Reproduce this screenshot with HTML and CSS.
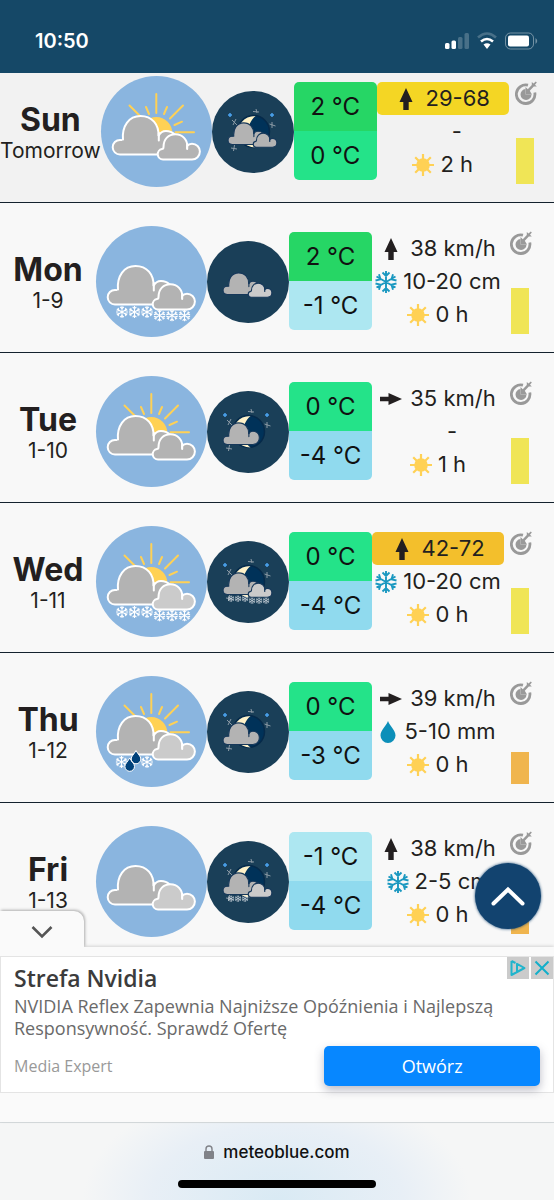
FILE: index.html
```html
<!DOCTYPE html>
<html lang="en">
<head>
    <meta charset="utf-8">
    <meta name="viewport" content="width=device-width, initial-scale=1">
    <title>Weather - meteoblue</title>
    <link rel="stylesheet" href="styles.css">
</head>
<body>
    <!-- shared icon shapes -->
    <svg class="defs" aria-hidden="true">
        <symbol id="cloud-big" viewBox="0 0 111 111">
            <path d="M19 78.500a7.300 7.300 0 0 1 0-14.600q3 0 3 .4C20.500 50 28 40 39.500 40S58 48.500 57.500 60C59 57 61.500 55 65 55c7 0 11.500 5 11.500 11.500S72 78.500 65 78.500z"/>
            <path class="notch" d="M57.800 57v7.500"/>
        </symbol>
        <symbol id="cloud-small" viewBox="0 0 111 111">
            <path d="M62 83.500a5.300 5.300 0 0 1-1-10.500q1.500 0 1.500-2C62.500 63 67.500 58.300 74.500 58.300S86.500 64 86.200 70c1-1.500 3-2.300 4.800-2.300a7.900 7.900 0 0 1 0 15.800z"/>
            <path class="notch" d="M86.200 68v5"/>
        </symbol>
        <symbol id="sunrays" viewBox="0 0 111 111">
            <circle cx="55.300" cy="57" r="16" fill="#ffd155" stroke="none"/>
            <path d="M55.300 18v19M74.500 56.300H93M28.500 29.500l12 12M82 29.500L69 42.500M45 31l3 7M66 31l-3 7M73.500 49l7.500-3.300" fill="none" stroke="#ffd155" stroke-width="2" stroke-linecap="round"/>
        </symbol>
        <symbol id="moon" viewBox="0 0 82 82">
            <circle cx="41.500" cy="40.500" r="16" fill="#003259" stroke="#062a4a" stroke-width="1.500"/>
            <path d="M43.500 25C31 25 26.500 34 26.500 41S32 56 43.500 56.500c-5-4-7.500-9-7.500-15s3-13 7.500-16.500z" fill="#fff2c8" stroke="none"/>
            <path d="M18 22v4M16 24h4M60 22v4M58 24h4" stroke="#4ba3ee" stroke-width="1.500"/>
            <path d="M20 29l5 5M24 28l-3 6M41 20.500l6 .5M44 18l1 4M57.500 33l6 2M60 31v6M19 57l6 1M22.500 54l-1 6" stroke="#8c9ba6" stroke-width="1"/>
        </symbol>
        <symbol id="flake" viewBox="0 0 22 22">
            <path d="M11 0v22M1.500 5.500l19 11M1.500 16.500l19-11M7.500 1.500L11 5l3.500-3.500M7.500 20.500L11 17l3.500 3.500M.5 9.500l5-1.200L4 3.300M21.500 9.500l-5-1.200L18 3.300M.5 12.500l5 1.200-1.500 5M21.500 12.500l-5 1.200 1.500 5" fill="none" stroke="currentColor" stroke-width="1.900"/>
        </symbol>
        <symbol id="flakes-left" viewBox="0 0 111 111">
            <use href="#flake" x="20" y="80" width="12" height="12"/>
            <use href="#flake" x="32.500" y="80" width="12" height="12"/>
            <use href="#flake" x="45" y="80" width="12" height="12"/>
        </symbol>
        <symbol id="flakes-right" viewBox="0 0 111 111">
            <use href="#flake" x="57.500" y="83.500" width="12" height="12"/>
            <use href="#flake" x="70" y="83.500" width="12" height="12"/>
            <use href="#flake" x="82.500" y="83.500" width="12" height="12"/>
        </symbol>
        <symbol id="sleet" viewBox="0 0 111 111">
            <use href="#flake" x="19.500" y="80" width="12" height="12"/>
            <use href="#flake" x="45" y="80" width="12" height="12"/>
            <path d="M40 74.500c2 4 4.800 5.500 4.800 8.500a4.800 4.800 0 0 1-9.600 0c0-3 2.800-4.500 4.800-8.500zM33.700 82c2 4 4.800 5.500 4.800 8.500a4.800 4.800 0 0 1-9.600 0c0-3 2.800-4.500 4.800-8.500z" fill="#00417a" stroke="#fff" stroke-width="1"/>
        </symbol>
        <symbol id="arrow" viewBox="0 0 22 22">
            <path d="M11 0l6.500 14H13.700v8h-5.400v-8H4.500z" fill="#231f20"/>
        </symbol>
        <symbol id="arrow-right" viewBox="0 0 22 22">
            <path d="M22 11L8.500 17V13.300H0V8.700h8.500V5z" fill="#231f20"/>
        </symbol>
        <symbol id="sun" viewBox="0 0 22 22">
            <circle cx="11" cy="11" r="6.800" fill="#ffd155"/>
            <path d="M11 0v22M0 11h22M3.200 3.200l15.600 15.600M18.800 3.200L3.200 18.800" stroke="#ffd155" stroke-width="2.200"/>
        </symbol>
        <symbol id="drop" viewBox="0 0 16 22">
            <path d="M8 0c2 5.500 7.500 9 7.500 14.500a7.500 7.500 0 0 1-15 0C.5 9 6 5.500 8 0z" fill="#0c8fb9"/>
        </symbol>
        <symbol id="target" viewBox="0 0 22 24">
            <path d="M13 4.200A9.300 9.300 0 1 0 19.800 11.500" fill="none" stroke="#999" stroke-width="2.800"/>
            <path d="M10.500 8a5.500 5.500 0 1 0 6 5.500h-6z" fill="#999"/>
            <path d="M10.500 13.500V6l2.300 2.200 4-4.200V1l1.700 1.500L20.800.5l1 1-1.800 2.300L21.800 5.500h-3l-4 4.200 2.200 3.800z" fill="#999"/>
        </symbol>
    </svg>

    <header class="status-bar">
        <span class="time">10:50</span>
        <svg class="status-icons" width="94" height="20" viewBox="0 0 94 20" aria-hidden="true">
            <g fill="#fff">
                <rect x="1" y="12" width="4.500" height="6" rx="1.500"/>
                <rect x="7.500" y="9.500" width="4.500" height="8.500" rx="1.500"/>
                <rect x="14" y="6" width="4.500" height="12" rx="1.500" opacity=".22"/>
                <rect x="20.500" y="2" width="4.500" height="16" rx="1.500" opacity=".22"/>
                <path d="M39.500 13.500q3.500-2.500 7 0L43 18z"/>
                <rect x="64" y="4.500" width="21" height="11" rx="2"/>
                <path d="M91.500 7q3.500 3 0 6z" opacity=".4"/>
            </g>
            <path d="M37 10.500q6-5 12 0" fill="none" stroke="#fff" stroke-width="2.600"/>
            <path d="M34 6.500q9-8 18 0" fill="none" stroke="#fff" stroke-width="2.600" opacity=".22"/>
            <rect x="61.500" y="2" width="28" height="16" rx="5" fill="none" stroke="#fff" opacity=".4"/>
        </svg>
    </header>

    <main class="forecast">
        <section class="day today">
            <div class="date"><h2>Sun</h2><p>Tomorrow</p></div>
            <svg class="pic-day" viewBox="0 0 111 111" role="img" aria-label="Partly cloudy">
                <use href="#sunrays"/>
                <use href="#cloud-big"/>
                <use href="#cloud-small"/>
            </svg>
            <svg class="pic-night" viewBox="0 0 82 82" role="img" aria-label="Partly cloudy night">
                <use href="#moon"/>
                <g transform="translate(9.500 9.500) scale(.56)">
                    <use href="#cloud-big" width="111" height="111"/>
                    <use href="#cloud-small" width="111" height="111"/>
                </g>
            </svg>
            <div class="temps"><span class="t-green">2 °C</span><span class="t-mint">0 °C</span></div>
            <div class="data">
                <p class="gust yellow"><svg class="icon"><use href="#arrow"/></svg>29-68</p>
                <p><span class="icon"></span>-</p>
                <p><svg class="icon"><use href="#sun"/></svg>2 h</p>
            </div>
            <div class="rating">
                <svg class="target"><use href="#target"/></svg>
                <span class="bar high"></span>
            </div>
        </section>

        <section class="day">
            <div class="date"><h2>Mon</h2><p>1-9</p></div>
            <svg class="pic-day" viewBox="0 0 111 111" role="img" aria-label="Snow">
                <use href="#cloud-big"/>
                <use href="#cloud-small"/>
                <use href="#flakes-left"/>
                <use href="#flakes-right"/>
            </svg>
            <svg class="pic-night" viewBox="0 0 82 82" role="img" aria-label="Overcast night">
                <g transform="translate(9.500 9.500) scale(.56)">
                    <use href="#cloud-big" width="111" height="111"/>
                    <use class="light" href="#cloud-small" width="111" height="111"/>
                </g>
            </svg>
            <div class="temps"><span class="t-green">2 °C</span><span class="t-ice">-1 °C</span></div>
            <div class="data">
                <p class="wind"><svg class="icon"><use href="#arrow"/></svg>38 km/h</p>
                <p><svg class="icon snow"><use href="#flake"/></svg>10-20 cm</p>
                <p><svg class="icon"><use href="#sun"/></svg>0 h</p>
            </div>
            <div class="rating">
                <svg class="target"><use href="#target"/></svg>
                <span class="bar high"></span>
            </div>
        </section>

        <section class="day">
            <div class="date"><h2>Tue</h2><p>1-10</p></div>
            <svg class="pic-day" viewBox="0 0 111 111" role="img" aria-label="Partly cloudy">
                <use href="#sunrays"/>
                <use href="#cloud-big"/>
                <use href="#cloud-small"/>
            </svg>
            <svg class="pic-night" viewBox="0 0 82 82" role="img" aria-label="Partly cloudy night">
                <use href="#moon"/>
                <g transform="translate(9.500 9.500) scale(.56)">
                    <use href="#cloud-big" width="111" height="111"/>
                </g>
            </svg>
            <div class="temps"><span class="t-mint">0 °C</span><span class="t-sky">-4 °C</span></div>
            <div class="data">
                <p class="wind"><svg class="icon"><use href="#arrow-right"/></svg>35 km/h</p>
                <p><span class="icon"></span>-</p>
                <p><svg class="icon"><use href="#sun"/></svg>1 h</p>
            </div>
            <div class="rating">
                <svg class="target"><use href="#target"/></svg>
                <span class="bar high"></span>
            </div>
        </section>

        <section class="day">
            <div class="date"><h2>Wed</h2><p>1-11</p></div>
            <svg class="pic-day" viewBox="0 0 111 111" role="img" aria-label="Sun and snow">
                <use href="#sunrays"/>
                <use href="#cloud-big"/>
                <use class="light" href="#cloud-small"/>
                <use href="#flakes-left"/>
                <use href="#flakes-right"/>
            </svg>
            <svg class="pic-night" viewBox="0 0 82 82" role="img" aria-label="Snow at night">
                <use href="#moon"/>
                <g transform="translate(9.500 9.500) scale(.56)">
                    <use href="#cloud-big" width="111" height="111"/>
                    <use class="light" href="#cloud-small" width="111" height="111"/>
                    <use href="#flakes-left" width="111" height="111"/>
                    <use href="#flakes-right" width="111" height="111"/>
                </g>
            </svg>
            <div class="temps"><span class="t-mint">0 °C</span><span class="t-sky">-4 °C</span></div>
            <div class="data">
                <p class="gust orange"><svg class="icon"><use href="#arrow"/></svg>42-72</p>
                <p><svg class="icon snow"><use href="#flake"/></svg>10-20 cm</p>
                <p><svg class="icon"><use href="#sun"/></svg>0 h</p>
            </div>
            <div class="rating">
                <svg class="target"><use href="#target"/></svg>
                <span class="bar high"></span>
            </div>
        </section>

        <section class="day">
            <div class="date"><h2>Thu</h2><p>1-12</p></div>
            <svg class="pic-day" viewBox="0 0 111 111" role="img" aria-label="Sleet">
                <use href="#sunrays"/>
                <use href="#cloud-big"/>
                <use class="light" href="#cloud-small"/>
                <use href="#sleet"/>
            </svg>
            <svg class="pic-night" viewBox="0 0 82 82" role="img" aria-label="Partly cloudy night">
                <use href="#moon"/>
                <g transform="translate(9.500 9.500) scale(.56)">
                    <use href="#cloud-big" width="111" height="111"/>
                </g>
            </svg>
            <div class="temps"><span class="t-mint">0 °C</span><span class="t-sky">-3 °C</span></div>
            <div class="data">
                <p class="wind"><svg class="icon"><use href="#arrow-right"/></svg>39 km/h</p>
                <p class="rain"><svg class="icon drop"><use href="#drop"/></svg>5-10 mm</p>
                <p><svg class="icon"><use href="#sun"/></svg>0 h</p>
            </div>
            <div class="rating">
                <svg class="target"><use href="#target"/></svg>
                <span class="bar low"></span>
            </div>
        </section>

        <section class="day">
            <div class="date"><h2>Fri</h2><p>1-13</p></div>
            <svg class="pic-day" viewBox="0 0 111 111" role="img" aria-label="Overcast">
                <use href="#cloud-big"/>
                <use class="light" href="#cloud-small"/>
            </svg>
            <svg class="pic-night" viewBox="0 0 82 82" role="img" aria-label="Light snow at night">
                <use href="#moon"/>
                <g transform="translate(9.500 9.500) scale(.56)">
                    <use href="#cloud-big" width="111" height="111"/>
                    <use class="light" href="#cloud-small" width="111" height="111"/>
                    <use href="#flakes-left" width="111" height="111"/>
                </g>
            </svg>
            <div class="temps"><span class="t-ice">-1 °C</span><span class="t-sky">-4 °C</span></div>
            <div class="data">
                <p class="wind"><svg class="icon"><use href="#arrow"/></svg>38 km/h</p>
                <p><svg class="icon snow"><use href="#flake"/></svg>2-5 cm</p>
                <p><svg class="icon"><use href="#sun"/></svg>0 h</p>
            </div>
            <div class="rating">
                <svg class="target"><use href="#target"/></svg>
                <span class="bar low"></span>
            </div>
        </section>
    </main>

    <aside class="ad-panel">
        <button class="ad-tab" aria-label="Hide ad">
            <svg width="22" height="14" viewBox="0 0 22 14"><path d="M1.500 2L11 11.500 20.500 2" fill="none" stroke="#555" stroke-width="2.600"/></svg>
        </button>
        <button class="to-top" aria-label="Back to top">
            <svg width="34" height="20" viewBox="0 0 34 20"><path d="M2.500 17.500L17 3.500l14.500 14" fill="none" stroke="#fff" stroke-width="4" stroke-linecap="round"/></svg>
        </button>
        <div class="ad">
            <div class="ad-controls">
                <button aria-label="Ad info">
                    <svg width="16" height="18" viewBox="0 0 16 18"><path d="M1.500 2v14L14.500 9 7 4.800v8M1.500 2l4 2" fill="none" stroke="#20b4cc" stroke-width="2" stroke-linejoin="round"/></svg>
                </button>
                <button aria-label="Close ad">
                    <svg width="16" height="16" viewBox="0 0 16 16"><path d="M1.500 1.500l13 13M14.500 1.500l-13 13" stroke="#12afca" stroke-width="2"/></svg>
                </button>
            </div>
            <h3>Strefa Nvidia</h3>
            <p class="ad-text">NVIDIA Reflex Zapewnia Najniższe Opóźnienia i Najlepszą Responsywność. Sprawdź Ofertę</p>
            <div class="ad-footer">
                <span>Media Expert</span>
                <a class="ad-button" href="#">Otwórz</a>
            </div>
        </div>
    </aside>

    <footer class="browser-bar">
        <div class="address">
            <svg width="10" height="14" viewBox="0 0 10 14" aria-hidden="true"><rect y="6" width="10" height="8" rx="1" fill="#808288"/><path d="M2 6.500V4a3 3 0 0 1 6 0v2.500" fill="none" stroke="#808288" stroke-width="1.400"/></svg>
            meteoblue.com
        </div>
        <div class="home-line"></div>
    </footer>
</body>
</html>
```

FILE: styles.css
```css
* {
    box-sizing: border-box;
}

body {
    margin: 0;
    min-height: 100vh;
    display: flex;
    flex-direction: column;
    font-family: Inter, "Liberation Sans", sans-serif;
    color: #231f20;
    background: #f8f8f8;
}

h2, h3, p {
    margin: 0;
}

button {
    border: none;
    padding: 0;
    display: flex;
    align-items: center;
    justify-content: center;
    cursor: pointer;
}

.defs {
    position: absolute;
    width: 0;
    height: 0;
}

/* status bar */
.status-bar {
    display: flex;
    justify-content: space-between;
    align-items: center;
    padding: 26px 16px 17px 35px;
    background: #154867;
    color: #fff;
}

.time {
    font-size: 20px;
    line-height: 30px;
    font-weight: 600;
}

/* forecast rows */
.day {
    display: flex;
    align-items: center;
    padding: 23px 0 15px;
    border-bottom: 1px solid #14222e;
}

.day.today {
    padding-top: 3px;
    background: #f2f2f2;
}

.day:last-child {
    padding-bottom: 10px;
    border-bottom: none;
}

.date {
    min-width: 96px;
    padding-top: 3px;
    text-align: center;
}

.date h2 {
    font-size: 32px;
    line-height: 36px;
    font-weight: 700;
}

.date p {
    font-size: 21px;
    line-height: 26px;
}

.pic-day, .pic-night {
    flex-shrink: 0;
    border-radius: 50%;
    fill: #b3b3b3;
}

.pic-day {
    width: 111px;
    height: 111px;
    background: #8ab5df;
    stroke: #fff;
    stroke-width: 2;
    color: #fff;
}

.pic-night {
    width: 82px;
    height: 82px;
    background: #1a3f58;
    stroke: #17385a;
    stroke-width: 2;
    color: #dfe5ea;
}

.light {
    fill: #cbcbcb;
}

.notch {
    fill: none;
    stroke-linecap: round;
}

.temps {
    width: 83px;
    flex-shrink: 0;
    align-self: flex-start;
    margin-top: 6px;
    border-radius: 5px;
    overflow: hidden;
    color: #111;
    font-size: 24px;
    line-height: 49px;
    text-align: center;
}

.temps span {
    display: block;
}

.t-green { background: #26d665; }
.t-mint { background: #24e389; }
.t-ice { background: #ade7f1; }
.t-sky { background: #90daee; }

.data {
    width: 132px;
    flex-shrink: 0;
    font-size: 22px;
}

.data p {
    display: flex;
    align-items: center;
    justify-content: center;
    gap: 6px;
    line-height: 33px;
    white-space: nowrap;
}

.data .wind, .data .gust, .data .rain {
    gap: 8px;
}

.gust {
    border-radius: 5px;
}

.yellow { background: #f4d624; }
.orange { background: #f3bf2c; }

.icon {
    width: 22px;
    height: 22px;
    flex-shrink: 0;
}

.snow {
    color: #1a98c0;
}

.drop {
    width: 16px;
}

.rating {
    align-self: stretch;
    display: flex;
    flex-direction: column;
    justify-content: space-between;
    padding: 5px 0 3px 6px;
}

.target {
    width: 22px;
    height: 24px;
}

.bar {
    width: 18px;
    margin-left: 1px;
}

.high {
    height: 46px;
    background: #f0e556;
}

.low {
    height: 32px;
    background: #f0b54e;
}

/* ad */
.ad-panel {
    position: relative;
    padding: 9px 0 29px;
    background: #fafafa;
    box-shadow: 0 -1px 3px rgba(0, 0, 0, 0.15);
    font-family: "Open Sans", "Noto Sans", sans-serif;
}

.ad-tab {
    position: absolute;
    left: 0;
    bottom: 100%;
    width: 84px;
    height: 36px;
    padding-top: 6px;
    background: #fafafa;
    border-radius: 0 10px 0 0;
    box-shadow: 1px -1px 3px rgba(0, 0, 0, 0.3);
    clip-path: inset(-4px -4px 0 0);
}

.to-top {
    position: absolute;
    right: 13px;
    bottom: calc(100% + 18px);
    width: 66px;
    height: 66px;
    border-radius: 50%;
    background: #12436f;
    box-shadow: 0 0 3px #12436f;
}

.ad {
    position: relative;
    padding: 6px 13px 6px;
    background: #fff;
    border: 1px solid #e4e4e4;
}

.ad-controls {
    position: absolute;
    top: 0;
    right: 0;
    display: flex;
    gap: 2px;
}

.ad-controls button {
    width: 22px;
    height: 22px;
    background: #cbcbcb;
}

.ad h3 {
    font-size: 23px;
    line-height: 30px;
    font-weight: 600;
    color: #3c3c3c;
}

.ad-text {
    max-width: 500px;
    margin-top: 2px;
    font-size: 18px;
    line-height: 22px;
    color: #6a6a6a;
}

.ad-footer {
    display: flex;
    justify-content: space-between;
    align-items: center;
    margin-top: 7px;
    font-size: 16px;
    color: #999;
}

.ad-button {
    width: 41%;
    border-radius: 5px;
    background: #0787ff;
    box-shadow: 0 4px 10px rgba(60, 60, 90, 0.35);
    color: #fff;
    font-size: 18px;
    line-height: 40px;
    text-align: center;
    text-decoration: none;
}

/* browser bar */
.browser-bar {
    flex: 1;
    padding: 16px 0 12px;
    border-top: 1px solid #d8dddf;
    background: radial-gradient(ellipse 35% 150% at 50% 100%, #d9eaf4, #e8eff6 65%, #f5f6f6);
}

.address {
    display: flex;
    justify-content: center;
    align-items: center;
    gap: 9px;
    color: #111;
    font-size: 17px;
    font-weight: 500;
    line-height: 26px;
}

.home-line {
    width: 198px;
    height: 8px;
    margin: 15px auto 0;
    border-radius: 4px;
    background: #000;
}
```
